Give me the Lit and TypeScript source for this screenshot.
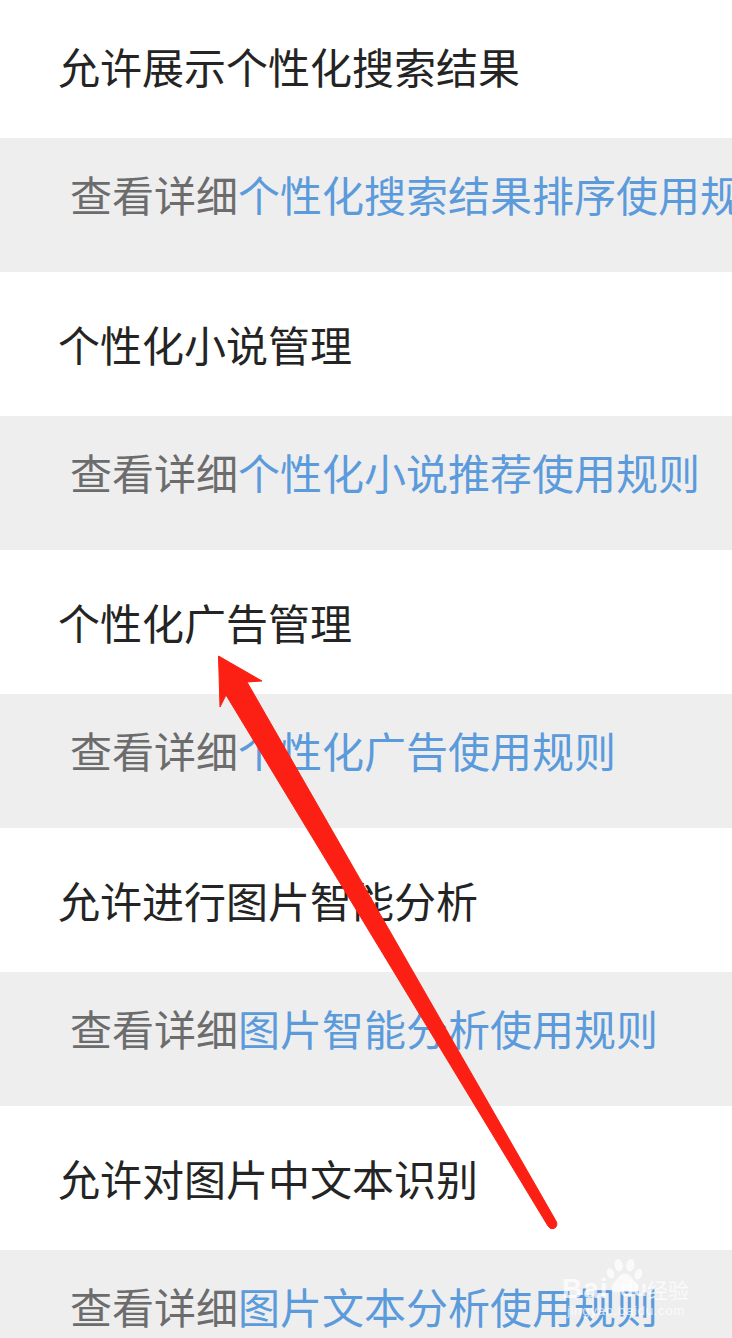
import { LitElement, html, css } from "lit";
import { customElement } from "lit/decorators.js";

const ROWS = [
  ["允许展示个性化搜索结果", "个性化搜索结果排序使用规则"],
  ["个性化小说管理", "个性化小说推荐使用规则"],
  ["个性化广告管理", "个性化广告使用规则"],
  ["允许进行图片智能分析", "图片智能分析使用规则"],
  ["允许对图片中文本识别", "图片文本分析使用规则"],
];

@customElement("app-root")
export class AppRoot extends LitElement {
  static styles = css`
    :host {
      display: block;
      position: relative;
      width: 732px;
      height: 1338px;
      overflow: hidden;
      background: #fff;
      font-family: "Noto Sans CJK SC", "Noto Sans", sans-serif;
      font-size: 42px;
      line-height: 42px;
    }
    .title {
      padding: 51px 0 51px 58px;
      color: #242424;
      white-space: nowrap;
    }
    .title.first {
      padding-top: 45px;
    }
    .info {
      padding: 35px 0 57px 70px;
      background: #eeeeef;
      color: #6c6c6c;
      white-space: nowrap;
      overflow: hidden;
    }
    .info span {
      color: #5b9bdb;
    }
    .arrow {
      position: absolute;
      left: 0;
      top: 0;
      width: 732px;
      height: 1338px;
    }
    .mark {
      position: absolute;
      left: 560px;
      top: 1258px;
      width: 172px;
      height: 80px;
      color: rgba(255, 255, 255, 0.72);
      font-family: "Liberation Sans", sans-serif;
    }
    .mark svg {
      position: absolute;
      left: 44px;
      top: 1px;
      width: 40px;
      height: 36px;
    }
    .bai {
      position: absolute;
      left: 2px;
      top: 16px;
      font-size: 28px;
      line-height: 30px;
      font-weight: 700;
      letter-spacing: 1px;
    }
    .du {
      position: absolute;
      left: 60px;
      top: 19px;
      font-size: 22px;
      line-height: 24px;
      font-weight: 700;
    }
    .jy {
      position: absolute;
      left: 87px;
      top: 19px;
      font-family: "Noto Sans CJK SC", sans-serif;
      font-size: 21px;
      line-height: 24px;
      white-space: nowrap;
    }
    .url {
      position: absolute;
      left: 7px;
      top: 45px;
      font-size: 13.5px;
      line-height: 16px;
      letter-spacing: 0.55px;
      white-space: nowrap;
    }
  `;

  render() {
    return html`
      ${ROWS.map(
        ([t, l], i) => html`
          <div class="title ${i === 0 ? "first" : ""}">${t}</div>
          <div class="info">查看详细<span>${l}</span></div>
        `
      )}
      <svg class="arrow" viewBox="0 0 732 1338">
        <path
          fill="#fb2013"
          stroke="#fb2013"
          stroke-width="1"
          stroke-linejoin="round"
          d="M218.5 656 L262 681 L247 682 L556 1221 Q558.5 1226 554 1228.5 Q550.5 1230 548 1226 L226 695 L220 707 Z"
        />
      </svg>
      <div class="mark">
        <svg viewBox="0 0 44 40" fill="currentColor">
          <ellipse cx="7" cy="16" rx="4" ry="6" transform="rotate(-18 7 16)" />
          <ellipse cx="16" cy="7" rx="4.5" ry="7" transform="rotate(-8 16 7)" />
          <ellipse cx="29" cy="7" rx="4.5" ry="7" transform="rotate(10 29 7)" />
          <ellipse cx="38" cy="17" rx="4" ry="6" transform="rotate(22 38 17)" />
          <path d="M23 16 C17 16 15 22 11 26 C6 31 8 38 15 37 C19 36 27 36 31 37 C38 38 40 31 35 26 C31 22 29 16 23 16 Z" />
        </svg>
        <span class="bai">Bai</span>
        <span class="du">du</span>
        <span class="jy">经验</span>
        <span class="url">jingyan.baidu.com</span>
      </div>
    `;
  }
}
